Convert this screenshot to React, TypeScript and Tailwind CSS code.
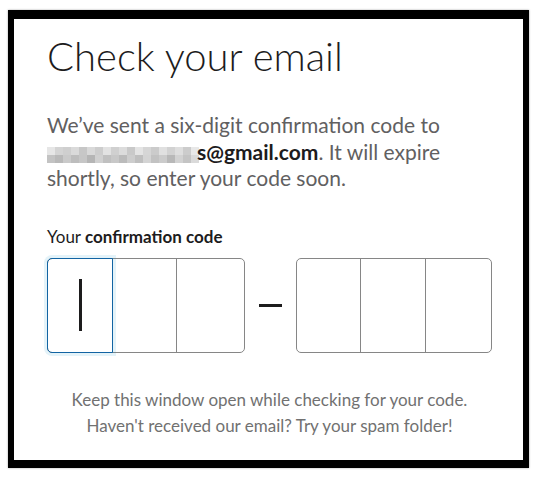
import React from "react";

const blur = [
  "#e6e6e6", "#d4d4d4", "#cfcfcf", "#dadada", "#c7c7c7", "#d9d9d9", "#cdcdcd", "#e2e2e2",
  "#d0d0d0", "#dcdcdc", "#c9c9c9", "#e4e4e4", "#d6d6d6", "#cbcbcb", "#e0e0e0", "#d2d2d2",
  "#dedede", "#cccccc", "#e8e8e8",
];
const blur2 = [
  "#c3c3c3", "#b9b9b9", "#cacaca", "#bdbdbd", "#c6c6c6", "#b5b5b5", "#d0d0d0", "#c0c0c0",
  "#c8c8c8", "#bbbbbb", "#cdcdcd", "#bfbfbf", "#d4d4d4", "#c2c2c2", "#cbcbcb", "#b8b8b8",
  "#d2d2d2", "#c4c4c4", "#dadada",
];

export default function App() {
  return (
    <div className="w-[538px] h-[477px] bg-white pt-[10px] pl-[8px]" style={{ fontFamily: "Lato, 'Open Sans', sans-serif" }}>
      <div className="w-[521px] h-[458px] border-black border-t-[9px] border-l-[6px] border-r-[6px] border-b-[8px] shadow-[0_0_2px_rgba(0,0,0,0.35)] bg-white pl-[33px] pr-[20px]">
        <h1 className="font-light text-[40px] leading-none text-[#1d1c1d] mt-[17px]">Check your email</h1>
        <p className="mt-[36px] text-[21px] leading-[26.5px] text-[#616061]">
          We’ve sent a six-digit confirmation code to
          <br />
          <span className="inline-block h-[16px] w-[156px] align-[-3px] mr-[-6px] leading-none">
            <span className="flex">
              {blur.map((c, i) => (
                <span key={i} className="w-[8px] h-[8px] block shrink-0" style={{ background: c }} />
              ))}
            </span>
            <span className="flex">
              {blur2.map((c, i) => (
                <span key={i} className="w-[8px] h-[8px] block shrink-0" style={{ background: c }} />
              ))}
            </span>
          </span>
          <b className="font-bold text-[#1d1c1d]">s@gmail.com</b>. It will expire
          <br />
          shortly, so enter your code soon.
        </p>
        <div className="mt-[35px] text-[17px] leading-[20px] text-[#1d1c1d]">
          Your <b className="font-bold">confirmation code</b>
        </div>
        <div className="mt-[11px] flex items-center">
          <div className="flex w-[198px] h-[95px] rounded-[5px] border border-[#868686]">
            <div className="relative w-[66px] h-[95px] -m-px rounded-l-[5px] border border-[#1264a3] shadow-[0_0_0_3px_rgba(29,155,209,0.12)] flex items-center justify-center">
              <div className="w-[3px] h-[52px] bg-[#1d1c1d]" />
            </div>
            <div className="w-[65px] border-r border-[#868686]" />
            <div className="flex-1" />
          </div>
          <div className="w-[23px] h-[3px] bg-[#1d1c1d] mx-[14px] mt-[1px]" />
          <div className="flex w-[196px] h-[95px] rounded-[5px] border border-[#868686]">
            <div className="w-[64px] border-r border-[#868686]" />
            <div className="w-[65px] border-r border-[#868686]" />
            <div className="flex-1" />
          </div>
        </div>
        <div className="mt-[34px] text-center text-[17px] leading-[26px] text-[#717171] pr-[11px]">
          Keep this window open while checking for your code.
          <br />
          Haven't received our email? Try your spam folder!
        </div>
      </div>
    </div>
  );
}
